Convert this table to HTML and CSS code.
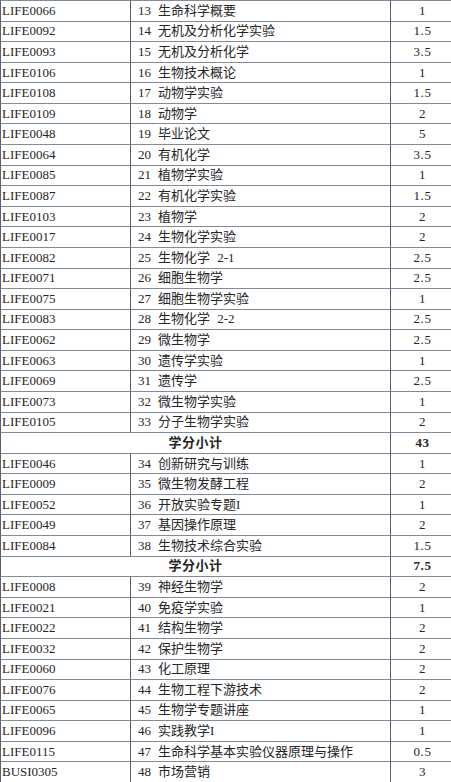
FILE: index.html
```html
<!DOCTYPE html>
<html lang="zh-CN">
<head>
<meta charset="utf-8">
<title>课程表</title>
<link rel="stylesheet" href="styles.css">
</head>
<body>
<div class="table">
  <div class="row"><div class="code">LIFE0066</div><div class="name"><span class="no">13</span>生命科学概要</div><div class="credit">1</div></div>
  <div class="row"><div class="code">LIFE0092</div><div class="name"><span class="no">14</span>无机及分析化学实验</div><div class="credit">1.5</div></div>
  <div class="row"><div class="code">LIFE0093</div><div class="name"><span class="no">15</span>无机及分析化学</div><div class="credit">3.5</div></div>
  <div class="row"><div class="code">LIFE0106</div><div class="name"><span class="no">16</span>生物技术概论</div><div class="credit">1</div></div>
  <div class="row"><div class="code">LIFE0108</div><div class="name"><span class="no">17</span>动物学实验</div><div class="credit">1.5</div></div>
  <div class="row"><div class="code">LIFE0109</div><div class="name"><span class="no">18</span>动物学</div><div class="credit">2</div></div>
  <div class="row"><div class="code">LIFE0048</div><div class="name"><span class="no">19</span>毕业论文</div><div class="credit">5</div></div>
  <div class="row"><div class="code">LIFE0064</div><div class="name"><span class="no">20</span>有机化学</div><div class="credit">3.5</div></div>
  <div class="row"><div class="code">LIFE0085</div><div class="name"><span class="no">21</span>植物学实验</div><div class="credit">1</div></div>
  <div class="row"><div class="code">LIFE0087</div><div class="name"><span class="no">22</span>有机化学实验</div><div class="credit">1.5</div></div>
  <div class="row"><div class="code">LIFE0103</div><div class="name"><span class="no">23</span>植物学</div><div class="credit">2</div></div>
  <div class="row"><div class="code">LIFE0017</div><div class="name"><span class="no">24</span>生物化学实验</div><div class="credit">2</div></div>
  <div class="row"><div class="code">LIFE0082</div><div class="name"><span class="no">25</span>生物化学 2-1</div><div class="credit">2.5</div></div>
  <div class="row"><div class="code">LIFE0071</div><div class="name"><span class="no">26</span>细胞生物学</div><div class="credit">2.5</div></div>
  <div class="row"><div class="code">LIFE0075</div><div class="name"><span class="no">27</span>细胞生物学实验</div><div class="credit">1</div></div>
  <div class="row"><div class="code">LIFE0083</div><div class="name"><span class="no">28</span>生物化学 2-2</div><div class="credit">2.5</div></div>
  <div class="row"><div class="code">LIFE0062</div><div class="name"><span class="no">29</span>微生物学</div><div class="credit">2.5</div></div>
  <div class="row"><div class="code">LIFE0063</div><div class="name"><span class="no">30</span>遗传学实验</div><div class="credit">1</div></div>
  <div class="row"><div class="code">LIFE0069</div><div class="name"><span class="no">31</span>遗传学</div><div class="credit">2.5</div></div>
  <div class="row"><div class="code">LIFE0073</div><div class="name"><span class="no">32</span>微生物学实验</div><div class="credit">1</div></div>
  <div class="row"><div class="code">LIFE0105</div><div class="name"><span class="no">33</span>分子生物学实验</div><div class="credit">2</div></div>
  <div class="row subtotal"><div class="label">学分小计</div><div class="credit">43</div></div>
  <div class="row"><div class="code">LIFE0046</div><div class="name"><span class="no">34</span>创新研究与训练</div><div class="credit">1</div></div>
  <div class="row"><div class="code">LIFE0009</div><div class="name"><span class="no">35</span>微生物发酵工程</div><div class="credit">2</div></div>
  <div class="row"><div class="code">LIFE0052</div><div class="name"><span class="no">36</span>开放实验专题I</div><div class="credit">1</div></div>
  <div class="row"><div class="code">LIFE0049</div><div class="name"><span class="no">37</span>基因操作原理</div><div class="credit">2</div></div>
  <div class="row"><div class="code">LIFE0084</div><div class="name"><span class="no">38</span>生物技术综合实验</div><div class="credit">1.5</div></div>
  <div class="row subtotal"><div class="label">学分小计</div><div class="credit">7.5</div></div>
  <div class="row"><div class="code">LIFE0008</div><div class="name"><span class="no">39</span>神经生物学</div><div class="credit">2</div></div>
  <div class="row"><div class="code">LIFE0021</div><div class="name"><span class="no">40</span>免疫学实验</div><div class="credit">1</div></div>
  <div class="row"><div class="code">LIFE0022</div><div class="name"><span class="no">41</span>结构生物学</div><div class="credit">2</div></div>
  <div class="row"><div class="code">LIFE0032</div><div class="name"><span class="no">42</span>保护生物学</div><div class="credit">2</div></div>
  <div class="row"><div class="code">LIFE0060</div><div class="name"><span class="no">43</span>化工原理</div><div class="credit">2</div></div>
  <div class="row"><div class="code">LIFE0076</div><div class="name"><span class="no">44</span>生物工程下游技术</div><div class="credit">2</div></div>
  <div class="row"><div class="code">LIFE0065</div><div class="name"><span class="no">45</span>生物学专题讲座</div><div class="credit">1</div></div>
  <div class="row"><div class="code">LIFE0096</div><div class="name"><span class="no">46</span>实践教学I</div><div class="credit">1</div></div>
  <div class="row"><div class="code">LIFE0115</div><div class="name"><span class="no">47</span>生命科学基本实验仪器原理与操作</div><div class="credit">0.5</div></div>
  <div class="row"><div class="code">BUSI0305</div><div class="name"><span class="no">48</span>市场营销</div><div class="credit">3</div></div>
</div>
</body>
</html>
```

FILE: styles.css
```css
html, body {
  margin: 0;
  padding: 0;
  overflow: hidden;
  background: #ffffff;
}

.table {
  width: 456px;
  display: flex;
  flex-direction: column;
  font-family: "Liberation Serif", "Noto Sans CJK SC", serif;
  font-size: 13px;
  color: #262626;
}

.row {
  height: 20.58px;
  flex: none;
  display: grid;
  grid-template-columns: 130px 260px 66px;
}

.row.subtotal {
  grid-template-columns: 390px 66px;
}

.row > div {
  border-top: 1px solid #7f8c9b;
  border-left: 1px solid #56636f;
  display: flex;
  align-items: center;
  line-height: 16px;
  white-space: pre;
  overflow: hidden;
}

.code {
  padding-left: 1px;
}

.name {
  padding-left: 7px;
  word-spacing: 4px;
}

.no {
  margin-right: 7px;
}

.credit {
  justify-content: center;
  padding-right: 2px;
  letter-spacing: 0.6px;
}

.label,
.subtotal .credit {
  justify-content: center;
  font-weight: bold;
}

.label {
  letter-spacing: 0.5px;
}
```
